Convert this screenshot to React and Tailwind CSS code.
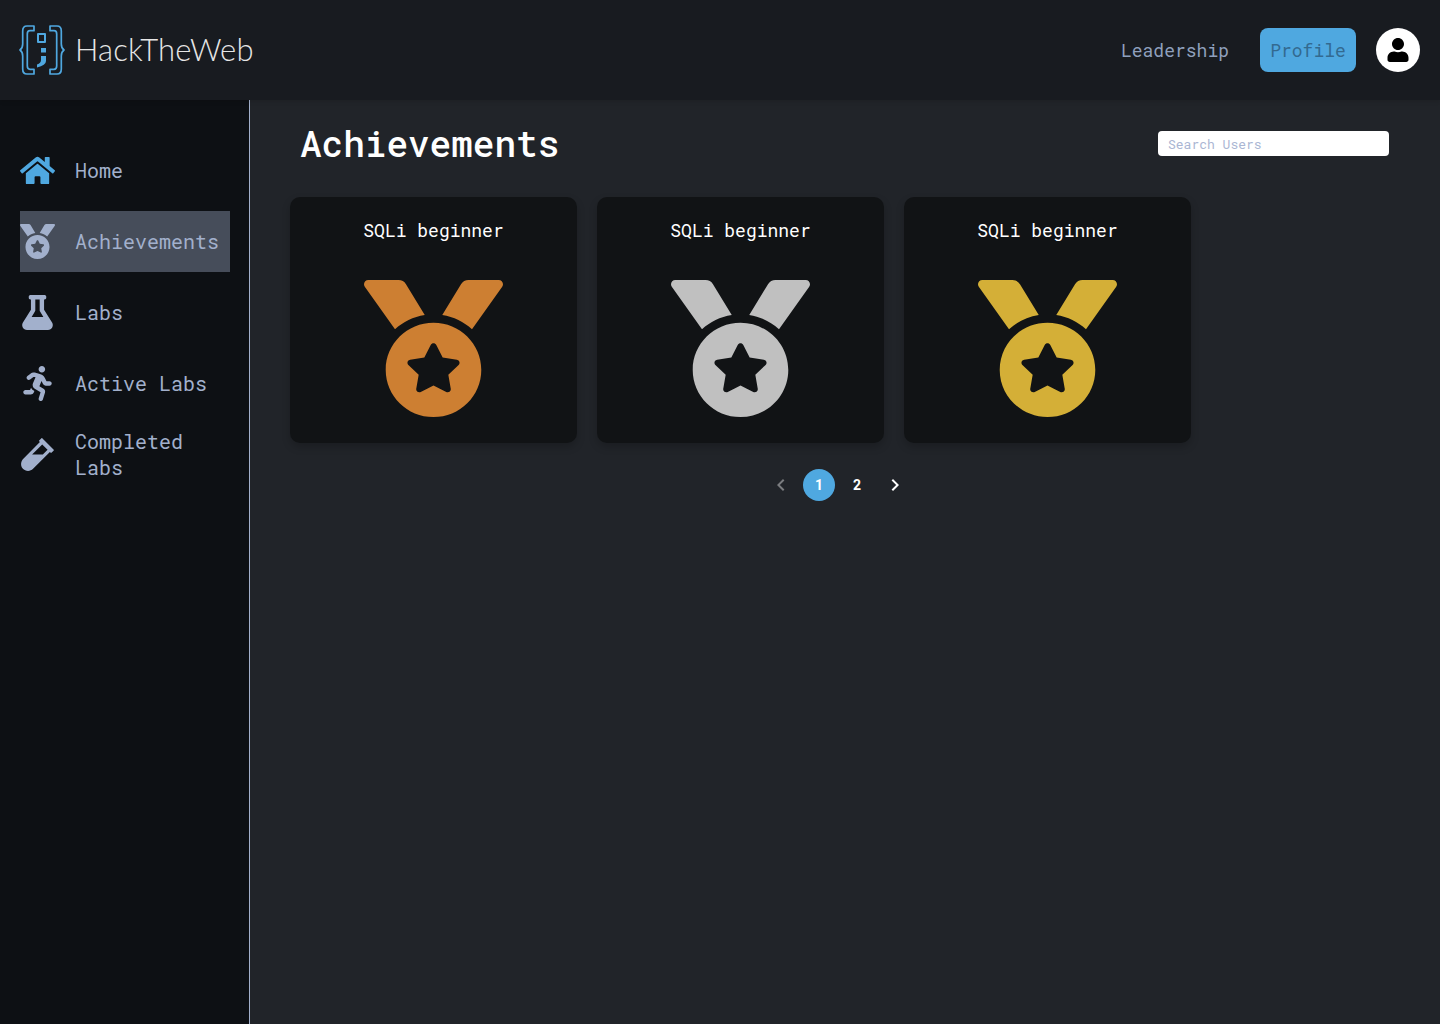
import React from "react";
import { FaHome, FaMedal, FaFlask, FaRunning, FaVial, FaUser } from "react-icons/fa";

const mono = "font-['Roboto_Mono','Liberation_Mono',monospace]";

function Logo() {
  return (
    <svg width="46" height="50" viewBox="0 0 46 50" fill="none" stroke="#4fa8e0" strokeWidth="1.7" strokeLinejoin="round" className="shrink-0">
      <path d="M15 1H8Q3.700 1 3.700 6V19Q3.700 23 1 25Q3.700 27 3.700 31V44Q3.700 49 8 49H15V44.300H11Q8.300 44.300 8.300 41V9Q8.300 5.700 11 5.700H15Z" />
      <path d="M31 1H38Q42.300 1 42.300 6V19Q42.300 23 45 25Q42.300 27 42.300 31V44Q42.300 49 38 49H31V44.300H35Q37.700 44.300 37.700 41V9Q37.700 5.700 35 5.700H31Z" />
      <rect x="19" y="9" width="7" height="8" strokeWidth="2" />
      <rect x="22" y="23" width="5" height="4.500" fill="#4fa8e0" stroke="none" />
      <path d="M22 31H27V36Q27 40 18 42.500V39.500Q22 38 22 35Z" fill="#4fa8e0" stroke="none" />
    </svg>
  );
}

function NavItem({ icon: Icon, label, size = 35, active, color = "text-[#a2b0cc]" }) {
  return (
    <div className={`flex h-[61px] items-center ${active ? "bg-[#464d5a]" : ""}`}>
      <div className={`flex w-[35px] shrink-0 justify-center ${color}`}>
        <Icon size={size} />
      </div>
      <span className="ml-5 pb-[2px] text-[20px] leading-[26px] text-[#a2b0cc]">{label}</span>
    </div>
  );
}

function Card({ color }) {
  return (
    <div className="flex h-[246px] w-[287px] flex-col items-center rounded-[10px] bg-[#111315] pt-[19px] shadow-[0_4px_8px_rgba(0,0,0,0.2)]">
      <div className="text-[18px] leading-[28px] text-white">SQLi beginner</div>
      <div className="mt-[36px]" style={{ color }}>
        <FaMedal className="h-[137px] w-[139px]" preserveAspectRatio="none" />
      </div>
    </div>
  );
}

export default function App() {
  return (
    <div className={`flex h-[1024px] w-[1440px] flex-col overflow-hidden bg-[#212429] ${mono}`}>
      <header className="relative z-10 flex h-[100px] shrink-0 items-center justify-between bg-[#181b20] pl-[19px] pr-5 shadow-[0_2px_4px_rgba(0,0,0,0.1)]">
        <div className="flex items-center">
          <Logo />
          <span className="ml-[10px] pb-[2px] font-['Lato',sans-serif] text-[31px] font-light tracking-[0.2px] text-[#e6e6e6]">HackTheWeb</span>
        </div>
        <div className="flex items-center">
          <span className="text-[18px] text-[#8fa0bd]">Leadership</span>
          <div className="ml-[31px] flex h-11 w-24 items-center justify-center rounded-lg bg-[#4fa8e0] text-[18px] text-[#336a90]">Profile</div>
          <div className="ml-5 flex h-11 w-11 items-center justify-center rounded-full bg-white text-black">
            <FaUser size={24} />
          </div>
        </div>
      </header>
      <div className="flex min-h-0 flex-1">
        <aside className="w-[250px] shrink-0 border-r border-[#a2b0cc] bg-[#0d1014] px-5 pt-10">
          <div className="flex w-[210px] flex-col gap-[10px]">
            <NavItem icon={FaHome} label="Home" color="text-[#4fa8e0]" />
            <NavItem icon={FaMedal} label="Achievements" active />
            <NavItem icon={FaFlask} label="Labs" />
            <NavItem icon={FaRunning} label="Active Labs" />
            <NavItem icon={FaVial} label="Completed Labs" />
          </div>
        </aside>
        <main className="flex-1 pl-10 pr-[51px]">
          <div className="flex h-[97px] items-center justify-between pb-[11px] pl-[10px]">
            <h1 className="text-[36px] font-medium leading-[50px] text-white">Achievements</h1>
            <input
              placeholder="Search Users"
              className="h-[25px] w-[231px] rounded bg-white px-[10px] pt-[2px] text-[13px] text-black outline-none placeholder:text-[#aab6d3]"
            />
          </div>
          <div className="flex gap-5">
            <Card color="#cd7f32" />
            <Card color="#c0c0c0" />
            <Card color="#d4af37" />
          </div>
          <div className="mt-[26px] flex w-[1096px] items-center justify-center gap-[6px] font-['Roboto',sans-serif] text-[14px] font-bold text-white">
            <div className="flex h-8 w-8 items-center justify-center opacity-40">
              <svg width="24" height="24" viewBox="0 0 24 24" fill="currentColor"><path d="M15.410 7.410 14 6l-6 6 6 6 1.410-1.410L10.830 12z" /></svg>
            </div>
            <div className="flex h-8 w-8 items-center justify-center rounded-full bg-[#4fa8e0]">1</div>
            <div className="flex h-8 w-8 items-center justify-center">2</div>
            <div className="flex h-8 w-8 items-center justify-center">
              <svg width="24" height="24" viewBox="0 0 24 24" fill="currentColor"><path d="M10 6 8.590 7.410 13.170 12l-4.580 4.590L10 18l6-6z" /></svg>
            </div>
          </div>
        </main>
      </div>
    </div>
  );
}
